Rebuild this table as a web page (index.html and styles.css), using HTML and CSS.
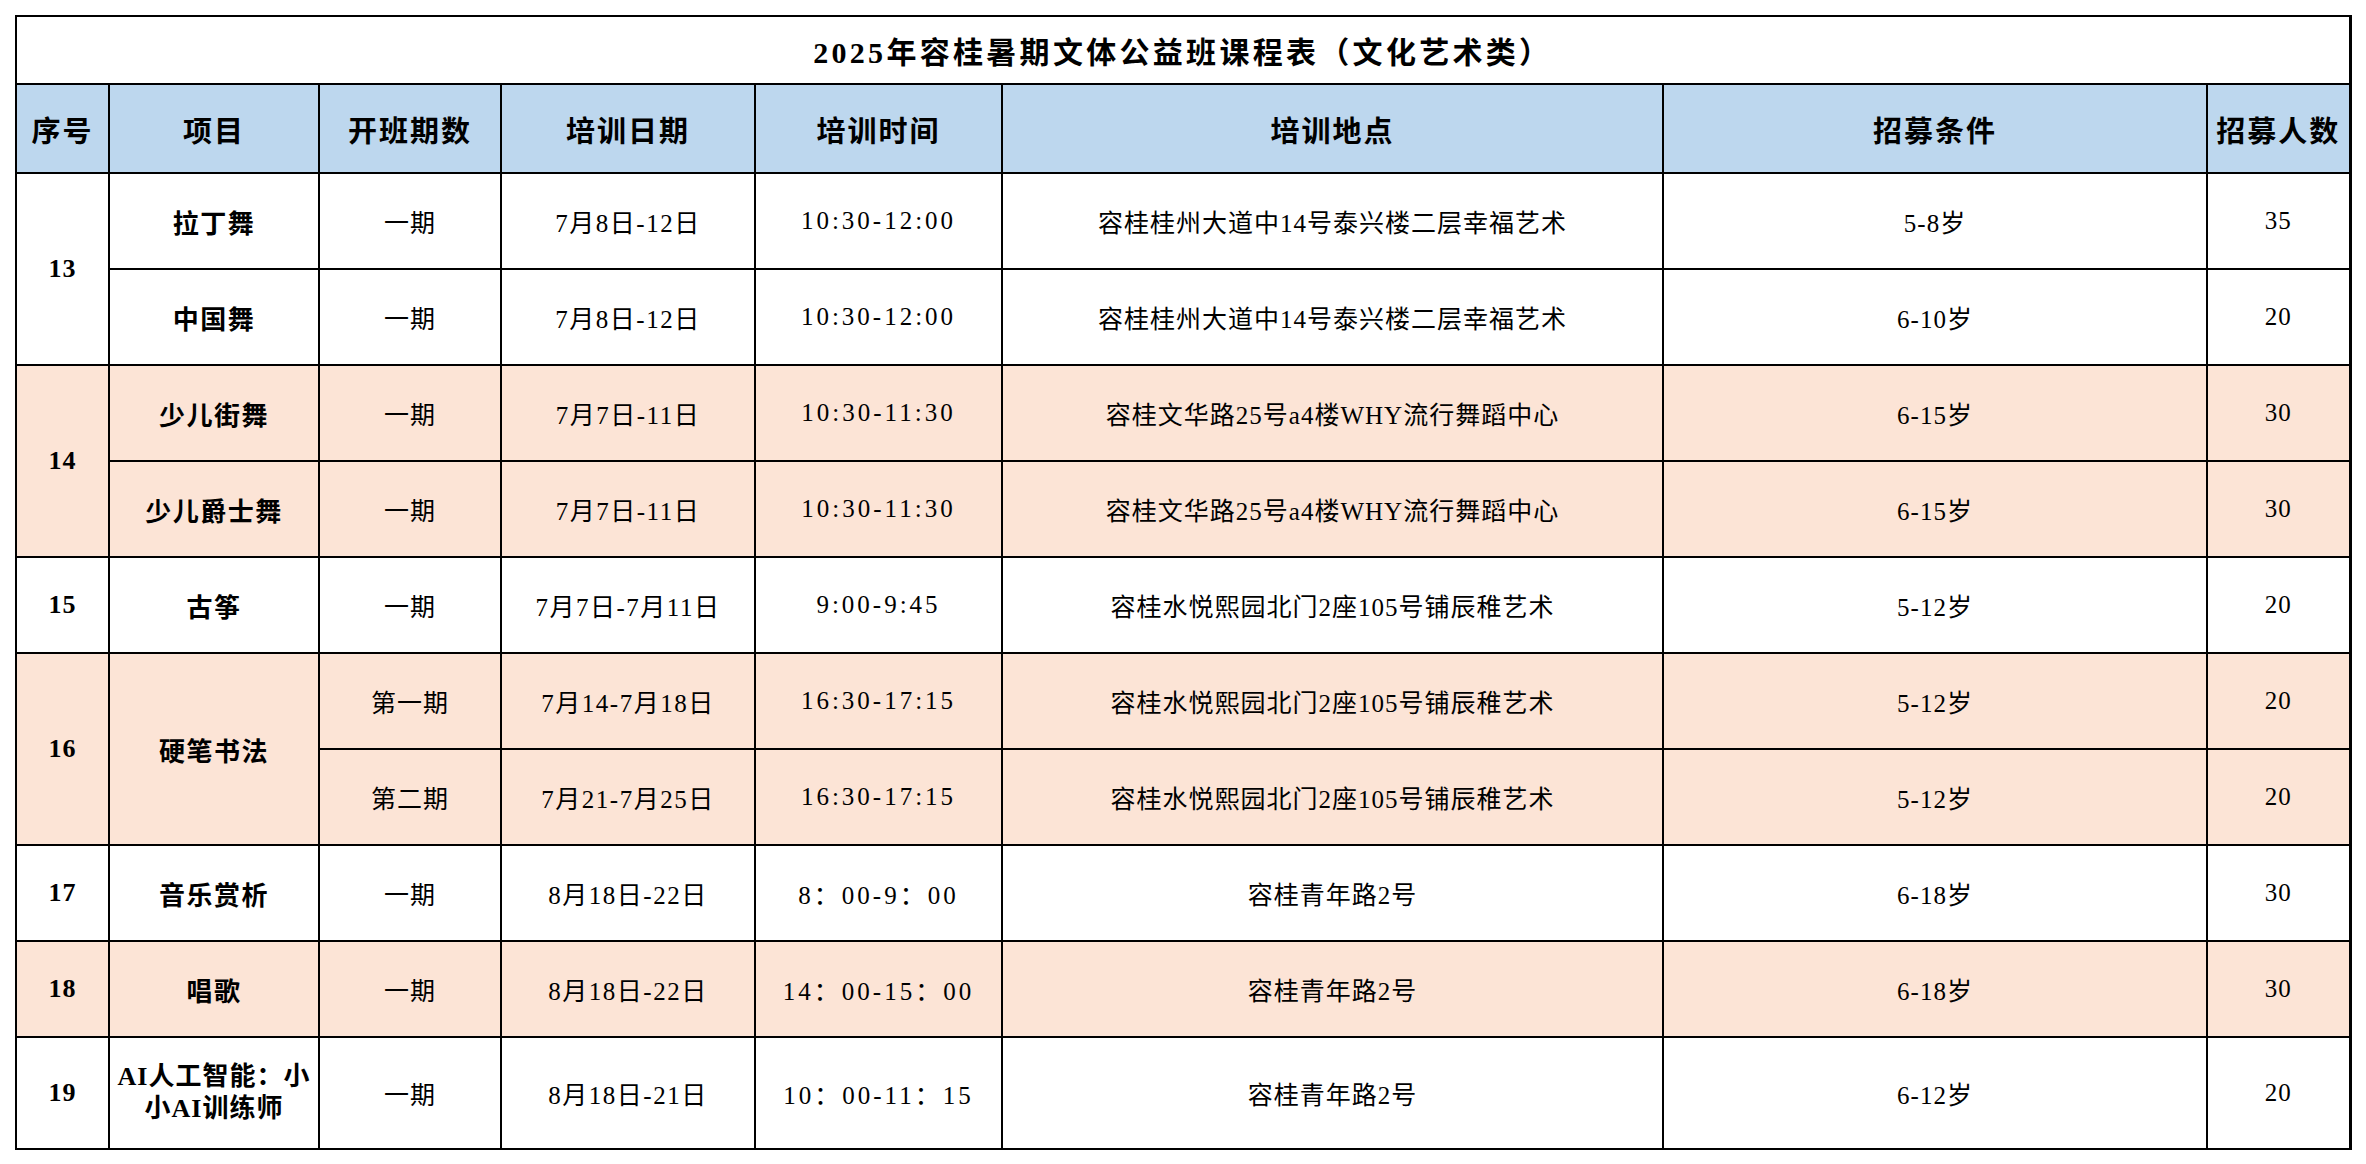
FILE: index.html
```html
<!DOCTYPE html>
<html lang="zh-CN">
<head>
<meta charset="utf-8">
<title>2025年容桂暑期文体公益班课程表（文化艺术类）</title>
<link rel="stylesheet" href="styles.css">
</head>
<body>
<table class="sheet">
  <colgroup>
    <col class="c-no"><col class="c-item"><col class="c-term"><col class="c-date"><col class="c-time"><col class="c-place"><col class="c-cond"><col class="c-num">
  </colgroup>
  <tr class="title-row"><td colspan="8" class="title">2025年容桂暑期文体公益班课程表（文化艺术类）</td></tr>
  <tr class="head-row">
    <th>序号</th><th>项目</th><th>开班期数</th><th>培训日期</th><th>培训时间</th><th>培训地点</th><th>招募条件</th><th>招募人数</th>
  </tr>
  <tr class="row">
    <td rowspan="2" class="no">13</td><td class="item">拉丁舞</td><td>一期</td><td class="date">7月8日-12日</td><td class="time">10:30-12:00</td><td>容桂桂州大道中14号泰兴楼二层幸福艺术</td><td>5-8岁</td><td>35</td>
  </tr>
  <tr class="row">
    <td class="item">中国舞</td><td>一期</td><td class="date">7月8日-12日</td><td class="time">10:30-12:00</td><td>容桂桂州大道中14号泰兴楼二层幸福艺术</td><td>6-10岁</td><td>20</td>
  </tr>
  <tr class="row pink">
    <td rowspan="2" class="no">14</td><td class="item">少儿街舞</td><td>一期</td><td class="date">7月7日-11日</td><td class="time">10:30-11:30</td><td>容桂文华路25号a4楼WHY流行舞蹈中心</td><td>6-15岁</td><td>30</td>
  </tr>
  <tr class="row pink">
    <td class="item">少儿爵士舞</td><td>一期</td><td class="date">7月7日-11日</td><td class="time">10:30-11:30</td><td>容桂文华路25号a4楼WHY流行舞蹈中心</td><td>6-15岁</td><td>30</td>
  </tr>
  <tr class="row">
    <td class="no">15</td><td class="item">古筝</td><td>一期</td><td class="date">7月7日-7月11日</td><td class="time">9:00-9:45</td><td>容桂水悦熙园北门2座105号铺辰稚艺术</td><td>5-12岁</td><td>20</td>
  </tr>
  <tr class="row pink">
    <td rowspan="2" class="no">16</td><td rowspan="2" class="item">硬笔书法</td><td>第一期</td><td class="date">7月14-7月18日</td><td class="time">16:30-17:15</td><td>容桂水悦熙园北门2座105号铺辰稚艺术</td><td>5-12岁</td><td>20</td>
  </tr>
  <tr class="row pink">
    <td>第二期</td><td class="date">7月21-7月25日</td><td class="time">16:30-17:15</td><td>容桂水悦熙园北门2座105号铺辰稚艺术</td><td>5-12岁</td><td>20</td>
  </tr>
  <tr class="row">
    <td class="no">17</td><td class="item">音乐赏析</td><td>一期</td><td class="date">8月18日-22日</td><td class="time">8：00-9：00</td><td>容桂青年路2号</td><td>6-18岁</td><td>30</td>
  </tr>
  <tr class="row pink">
    <td class="no">18</td><td class="item">唱歌</td><td>一期</td><td class="date">8月18日-22日</td><td class="time">14：00-15：00</td><td>容桂青年路2号</td><td>6-18岁</td><td>30</td>
  </tr>
  <tr class="row last">
    <td class="no">19</td><td class="item two-line">AI人工智能：小<br>小AI训练师</td><td>一期</td><td class="date">8月18日-21日</td><td class="time">10：00-11：15</td><td>容桂青年路2号</td><td>6-12岁</td><td>20</td>
  </tr>
</table>
</body>
</html>
```

FILE: styles.css
```css
html, body {
  margin: 0;
  padding: 0;
  background: #ffffff;
}

body {
  padding: 15px;
  font-family: "Liberation Serif", "Noto Sans CJK SC", serif;
  color: #000000;
}

.sheet {
  width: 2334px;
  border-collapse: collapse;
  table-layout: fixed;
  border-right: 3px solid #000;
}

.c-no { width: 93px; }
.c-item { width: 210px; }
.c-term { width: 182px; }
.c-date { width: 254px; }
.c-time { width: 247px; }
.c-place { width: 661px; }
.c-cond { width: 544px; }
.c-num { width: 143px; }

.sheet td,
.sheet th {
  border: 2px solid #000;
  padding: 0;
  text-align: center;
  vertical-align: middle;
  white-space: nowrap;
}

.title-row td {
  height: 66px;
}

.title {
  font-size: 30px;
  font-weight: bold;
  letter-spacing: 3.3px;
  background: #ffffff;
}

.head-row th {
  height: 87px;
  background: #bdd7ee;
  font-size: 29px;
  font-weight: bold;
  letter-spacing: 2px;
}

.row td {
  height: 94px;
  font-size: 25px;
  font-weight: normal;
  letter-spacing: 1px;
  background: #ffffff;
}

.row.pink td {
  background: #fce4d6;
}

.row.last td {
  height: 110px;
}

.row td.date {
  letter-spacing: 1.5px;
}

.row td.time {
  letter-spacing: 3px;
}

.row td.no {
  font-size: 26px;
  font-weight: bold;
  letter-spacing: 1px;
}

.row td.item {
  font-size: 26px;
  font-weight: bold;
  letter-spacing: 1.5px;
}

.row td.two-line {
  line-height: 32px;
  letter-spacing: 1px;
}
```
